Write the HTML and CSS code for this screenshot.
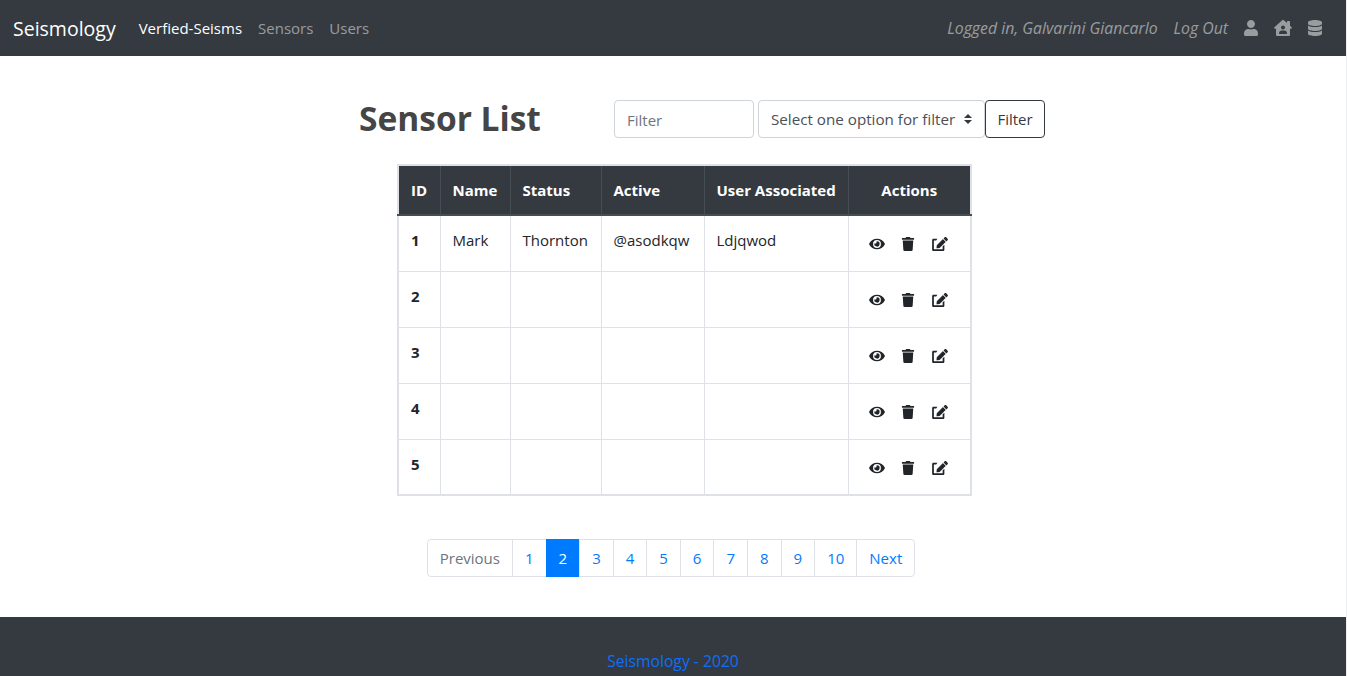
FILE: index.html
```html
<!DOCTYPE html>
<html lang="en">
<head>
    <meta charset="UTF-8">
    <meta name="viewport" content="width=device-width, initial-scale=1.0">
    <title>Sensor List</title>
    <link rel="stylesheet" href="styles.css">
</head>
<body>
    <svg class="icon-defs" aria-hidden="true">
        <symbol id="i-user" viewBox="0 0 448 512"><path d="M224 256c70.7 0 128-57.3 128-128S294.7 0 224 0 96 57.3 96 128s57.3 128 128 128zm89.6 32h-16.7c-22.2 10.2-46.9 16-72.9 16s-50.6-5.8-72.9-16h-16.7C60.2 288 0 348.2 0 422.4V464c0 26.5 21.5 48 48 48h352c26.5 0 48-21.5 48-48v-41.6c0-74.2-60.2-134.4-134.4-134.4z"/></symbol>
        <symbol id="i-house" viewBox="0 0 576 512"><path d="M570.69,236.27,512,184.44V48a16,16,0,0,0-16-16H432a16,16,0,0,0-16,16V99.67L314.78,10.3C308.5,4.61,296.53,0,288,0s-20.46,4.61-26.74,10.3l-256,226A18.27,18.27,0,0,0,0,248.2a18.64,18.64,0,0,0,4.09,10.71L25.5,282.7a21.14,21.14,0,0,0,12,5.3,21.67,21.67,0,0,0,10.69-4.11l15.9-14V480a32,32,0,0,0,32,32H480a32,32,0,0,0,32-32V269.88l15.91,14A21.94,21.94,0,0,0,538.63,288a20.89,20.89,0,0,0,11.87-5.31l21.41-23.81A21.64,21.64,0,0,0,576,248.19,21,21,0,0,0,570.69,236.27ZM288,176a64,64,0,1,1-64,64A64,64,0,0,1,288,176ZM400,448H176a16,16,0,0,1-16-16,96,96,0,0,1,96-96h64a96,96,0,0,1,96,96A16,16,0,0,1,400,448Z"/></symbol>
        <symbol id="i-database" viewBox="0 0 448 512"><path d="M448 73.143v45.714C448 159.143 347.667 192 224 192S0 159.143 0 118.857V73.143C0 32.857 100.333 0 224 0s224 32.857 224 73.143zM448 176v102.857C448 319.143 347.667 352 224 352S0 319.143 0 278.857V176c48.125 33.143 136.208 48.572 224 48.572S399.874 209.143 448 176zm0 160v102.857C448 479.143 347.667 512 224 512S0 479.143 0 438.857V336c48.125 33.143 136.208 48.572 224 48.572S399.874 369.143 448 336z"/></symbol>
        <symbol id="i-eye" viewBox="0 0 576 512"><path d="M572.52 241.4C518.29 135.59 410.93 64 288 64S57.68 135.64 3.48 241.41a32.35 32.35 0 0 0 0 29.19C57.71 376.41 165.07 448 288 448s230.32-71.64 284.52-177.41a32.35 32.35 0 0 0 0-29.19zM288 400a144 144 0 1 1 144-144 143.93 143.93 0 0 1-144 144zm0-240a95.31 95.31 0 0 0-25.31 3.79 47.85 47.85 0 0 1-66.9 66.9A95.78 95.78 0 1 0 288 160z"/></symbol>
        <symbol id="i-trash" viewBox="0 0 448 512"><path d="M432 32H312l-9.4-18.7A24 24 0 0 0 281.1 0H166.8a23.72 23.72 0 0 0-21.4 13.3L136 32H16A16 16 0 0 0 0 48v32a16 16 0 0 0 16 16h416a16 16 0 0 0 16-16V48a16 16 0 0 0-16-16zM53.2 467a48 48 0 0 0 47.9 45h245.8a48 48 0 0 0 47.9-45L416 128H32z"/></symbol>
        <symbol id="i-edit" viewBox="0 0 576 512"><path d="M402.6 83.2l90.2 90.2c3.8 3.8 3.8 10 0 13.8L274.4 405.6l-92.8 10.3c-12.4 1.4-22.9-9.1-21.5-21.5l10.3-92.8L388.8 83.2c3.8-3.8 10-3.8 13.8 0zm162-22.9l-48.8-48.8c-15.2-15.2-39.9-15.2-55.2 0l-35.4 35.4c-3.8 3.8-3.8 10 0 13.8l90.2 90.2c3.8 3.8 10 3.8 13.8 0l35.4-35.4c15.2-15.3 15.2-40 0-55.2zM384 346.2V448H64V128h73.1c3.2 0 6.2-1.3 8.5-3.5l40-40c7.6-7.6 2.2-20.5-8.5-20.5H48C21.5 64 0 85.5 0 112v352c0 26.5 21.5 48 48 48h352c26.5 0 48-21.5 48-48V306.2c0-10.7-12.9-16-20.5-8.5l-40 40c-2.2 2.3-3.5 5.3-3.5 8.5z"/></symbol>
    </svg>

    <nav class="navbar">
        <a href="#" class="brand">Seismology</a>
        <a href="#" class="nav-link active">Verfied-Seisms</a>
        <a href="#" class="nav-link">Sensors</a>
        <a href="#" class="nav-link">Users</a>
        <div class="nav-right">
            <span class="nav-link nav-em">Logged in, Galvarini Giancarlo</span>
            <a href="#" class="nav-link nav-em">Log Out</a>
            <a href="#" class="nav-icon"><svg class="icon icon-user"><use href="#i-user"/></svg></a>
            <a href="#" class="nav-icon"><svg class="icon icon-wide"><use href="#i-house"/></svg></a>
            <a href="#" class="nav-icon"><svg class="icon icon-user"><use href="#i-database"/></svg></a>
        </div>
    </nav>

    <main class="content">
        <div class="list-head">
            <h1>Sensor List</h1>
            <input class="filter-input" type="text" placeholder="Filter">
            <div class="filter-select">Select one option for filter
                <svg class="select-arrows" viewBox="0 0 4 5"><path d="M2 0L0 2h4zm0 5L0 3h4z"/></svg>
            </div>
            <button class="filter-btn">Filter</button>
        </div>

        <table class="sensor-table">
            <thead>
                <tr>
                    <th class="col-id">ID</th>
                    <th class="col-name">Name</th>
                    <th class="col-status">Status</th>
                    <th class="col-active">Active</th>
                    <th class="col-user">User Associated</th>
                    <th class="col-actions">Actions</th>
                </tr>
            </thead>
            <tbody>
                <tr>
                    <th>1</th><td>Mark</td><td>Thornton</td><td>@asodkqw</td><td>Ldjqwod</td>
                    <td><div class="actions"><svg class="icon"><use href="#i-eye"/></svg><svg class="icon"><use href="#i-trash"/></svg><svg class="icon"><use href="#i-edit"/></svg></div></td>
                </tr>
                <tr>
                    <th>2</th><td></td><td></td><td></td><td></td>
                    <td><div class="actions"><svg class="icon"><use href="#i-eye"/></svg><svg class="icon"><use href="#i-trash"/></svg><svg class="icon"><use href="#i-edit"/></svg></div></td>
                </tr>
                <tr>
                    <th>3</th><td></td><td></td><td></td><td></td>
                    <td><div class="actions"><svg class="icon"><use href="#i-eye"/></svg><svg class="icon"><use href="#i-trash"/></svg><svg class="icon"><use href="#i-edit"/></svg></div></td>
                </tr>
                <tr>
                    <th>4</th><td></td><td></td><td></td><td></td>
                    <td><div class="actions"><svg class="icon"><use href="#i-eye"/></svg><svg class="icon"><use href="#i-trash"/></svg><svg class="icon"><use href="#i-edit"/></svg></div></td>
                </tr>
                <tr>
                    <th>5</th><td></td><td></td><td></td><td></td>
                    <td><div class="actions"><svg class="icon"><use href="#i-eye"/></svg><svg class="icon"><use href="#i-trash"/></svg><svg class="icon"><use href="#i-edit"/></svg></div></td>
                </tr>
            </tbody>
        </table>

        <ul class="pagination">
            <li class="page-item disabled"><a href="#">Previous</a></li>
            <li class="page-item"><a href="#">1</a></li>
            <li class="page-item current"><a href="#">2</a></li>
            <li class="page-item"><a href="#">3</a></li>
            <li class="page-item"><a href="#">4</a></li>
            <li class="page-item"><a href="#">5</a></li>
            <li class="page-item"><a href="#">6</a></li>
            <li class="page-item"><a href="#">7</a></li>
            <li class="page-item"><a href="#">8</a></li>
            <li class="page-item"><a href="#">9</a></li>
            <li class="page-item"><a href="#">10</a></li>
            <li class="page-item"><a href="#">Next</a></li>
        </ul>
    </main>

    <footer class="footer">
        <a href="#">Seismology - 2020</a>
    </footer>
</body>
</html>
```

FILE: styles.css
```css
* {
    box-sizing: border-box;
}
body {
    margin: 0;
    font-family: 'Open Sans', sans-serif;
    font-size: 15px;
    line-height: 24px;
    color: #212529;
    background: #fff;
    border-right: 1px solid #eceef0;
}
a {
    text-decoration: none;
}
.icon-defs {
    display: none;
}
.icon {
    display: block;
    height: 14px;
    width: 16px;
    fill: currentColor;
}
.navbar {
    display: flex;
    align-items: center;
    height: 56px;
    padding: 0 24px 0 13px;
    background: #343a40;
}
.brand {
    color: #fff;
    font-size: 19.5px;
    padding-top: 2px;
    margin-right: 23px;
}
.nav-link {
    color: rgba(255, 255, 255, 0.5);
    margin-right: 16px;
}
.nav-link.active {
    color: #fff;
}
.nav-right {
    display: flex;
    align-items: center;
    margin-left: auto;
}
.nav-em {
    font-size: 15.8px;
    font-style: italic;
}
.nav-icon {
    color: rgba(255, 255, 255, 0.5);
    margin-left: 16px;
}
.nav-link + .nav-icon {
    margin-left: 0;
}
.icon-user {
    width: 14px;
    height: 16px;
}
.icon-wide {
    width: 18px;
    height: 16px;
}
.content {
    padding-top: 44px;
}
.list-head {
    display: flex;
    align-items: center;
    margin-left: 359px;
    height: 38px;
}
h1 {
    width: 255px;
    margin: 0 0 2px;
    font-size: 33.5px;
    line-height: 36px;
    font-weight: 700;
    color: #454545;
}
.filter-input {
    width: 140px;
    height: 38px;
    padding: 7px 12px 5px;
    font: inherit;
    color: #495057;
    border: 1px solid #ced4da;
    border-radius: 4px;
    margin-right: 4px;
}
.filter-input::placeholder {
    color: #6c757d;
}
.filter-select {
    display: flex;
    align-items: center;
    justify-content: space-between;
    width: 227px;
    height: 38px;
    padding: 0 12px;
    font-size: 15.2px;
    color: #495057;
    border: 1px solid #ced4da;
    border-radius: 4px;
}
.select-arrows {
    width: 8px;
    height: 10px;
    fill: #343a40;
}
.filter-btn {
    width: 60px;
    height: 38px;
    padding: 0;
    font: inherit;
    color: #343a40;
    background: #fff;
    border: 1px solid #343a40;
    border-radius: 4px;
}
.sensor-table {
    width: 573px;
    margin: 26px 0 0 397px;
    border-collapse: collapse;
    table-layout: fixed;
    border: 2px solid #dee2e6;
}
.sensor-table th,
.sensor-table td {
    height: 56px;
    padding: 12px;
    border: 1px solid #dee2e6;
    vertical-align: top;
    text-align: left;
}
.sensor-table thead th {
    height: 50px;
    color: #fff;
    white-space: nowrap;
    background: #343a40;
    border-color: #454d55;
    border-bottom-width: 2px;
    vertical-align: middle;
}
.sensor-table thead th.col-actions {
    text-align: center;
}
.col-id { width: 42px; }
.col-name { width: 70px; }
.col-status { width: 91px; }
.col-active { width: 103px; }
.col-user { width: 144px; }
.col-actions { width: 123px; }
.actions {
    display: flex;
    justify-content: space-between;
    padding: 9px 10px 0 8px;
    color: #212529;
}
.pagination {
    display: flex;
    justify-content: center;
    list-style: none;
    margin: 43px 4px 0 0;
    padding: 0;
}
.page-item a {
    display: block;
    height: 38px;
    padding: 6px 12px;
    color: #007bff;
    background: #fff;
    border: 1px solid #dee2e6;
    margin-left: -1px;
}
.page-item:first-child a {
    margin-left: 0;
    border-radius: 4px 0 0 4px;
}
.page-item:last-child a {
    border-radius: 0 4px 4px 0;
}
.page-item.disabled a {
    color: #6c757d;
}
.page-item.current a {
    color: #fff;
    background: #007bff;
    border-color: #007bff;
}
.footer {
    margin-top: 40px;
    height: 59px;
    padding-top: 32px;
    font-size: 15.7px;
    text-align: center;
    background: #343a40;
}
.footer a {
    color: #0d6efd;
}
```
